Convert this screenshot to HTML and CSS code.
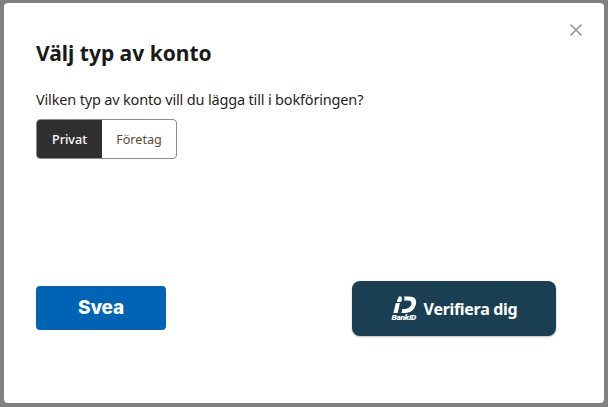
FILE: index.html
```html
<!DOCTYPE html>
<html lang="sv">
<head>
    <meta charset="UTF-8">
    <title>Välj typ av konto</title>
    <link rel="stylesheet" href="styles.css">
</head>
<body>
    <div class="dialog">
        <button class="close" aria-label="Stäng">
            <svg width="12" height="12" viewBox="0 0 12 12"><path d="M0.5 0.5 L11.5 11.5 M11.5 0.5 L0.5 11.5" stroke="#8a8a8a" stroke-width="1.4" fill="none"/></svg>
        </button>
        <h1>Välj typ av konto</h1>
        <p class="question">Vilken typ av konto vill du lägga till i bokföringen?</p>
        <div class="toggle">
            <div class="opt active">Privat</div>
            <div class="opt">Företag</div>
        </div>
        <div class="actions">
            <button class="svea">Svea</button>
            <button class="bankid">
                <svg width="26" height="25" viewBox="0 0 26 25">
                    <path d="M2.4 17 L4.8 7 L9 7 L6.6 17 Z" fill="#fff"/>
                    <path d="M7.6 0.6 L10.6 0.6 L10.6 2.4 L11.2 2.4 L10.2 6 L5.8 6 L6.8 2.4 L7.4 2.4 Z" fill="#fff"/>
                    <path d="M12.6 0.4 L18.4 0.4 C24.2 0.4 25.8 4 25 8 C24 13 20 17 14 17 L10.4 17 L11.4 13 C16 13.4 19.6 11.6 20.4 8 C20.9 5.6 19.6 4.4 17 4.4 L13 4.4 C13.8 3 13.6 1.4 12.6 0.4 Z" fill="#fff"/>
                    <text x="0.5" y="24.4" class="bankid-text" textLength="24.5" lengthAdjust="spacingAndGlyphs">BankID</text>
                </svg>
                <span>Verifiera dig</span>
            </button>
        </div>
    </div>
</body>
</html>
```

FILE: styles.css
```css
* { box-sizing: border-box; }
html, body { height: 100%; }
body { margin: 0; background: #808080; padding: 3px 4px 4px; font-family: "Noto Sans", sans-serif; color: #1f1f1f; }
.dialog { position: relative; background: #fff; border-radius: 4px; height: 400px; padding: 35px 32px 0; display: flex; flex-direction: column; align-items: flex-start; }
.close { position: absolute; top: 21px; right: 22px; padding: 0; border: 0; background: none; line-height: 0; }
h1 { margin: 0; font-size: 21px; line-height: 30px; font-weight: 700; color: #1a1a1a; }
.question { margin: 20px 0 0; font-size: 14.5px; line-height: 22px; letter-spacing: -0.17px; }
.toggle { display: flex; margin-top: 9px; height: 40px; width: 141px; border: 1px solid #8c8c8c; border-radius: 4px; overflow: hidden; font-size: 12.6px; }
.opt { display: flex; align-items: center; justify-content: center; flex: 1; color: #5c4a32; }
.opt.active { flex: 0 0 65px; background: #2f2f2f; color: #fff; font-weight: 500; }
.actions { margin-top: 122px; width: 520px; display: flex; justify-content: space-between; align-items: flex-start; }
button { font-family: inherit; }
.svea { width: 130px; height: 44px; margin-top: 5px; border: 0; border-radius: 4px; background: #0064b4; color: #fff; font-family: Inter, sans-serif; font-size: 19px; font-weight: 800; letter-spacing: -0.2px; padding-bottom: 3px; }
.bankid { width: 204px; height: 55px; border: 0; border-radius: 8px; background: #1a3f52; color: #fff; font-size: 16px; font-weight: 700; display: flex; align-items: center; justify-content: center; gap: 7px; box-shadow: 0 1px 2px rgba(0,0,0,.25); letter-spacing: -0.3px; }
.bankid-text { font-family: Roboto, sans-serif; font-size: 7.5px; font-weight: 900; font-style: italic; fill: #fff; }
```
